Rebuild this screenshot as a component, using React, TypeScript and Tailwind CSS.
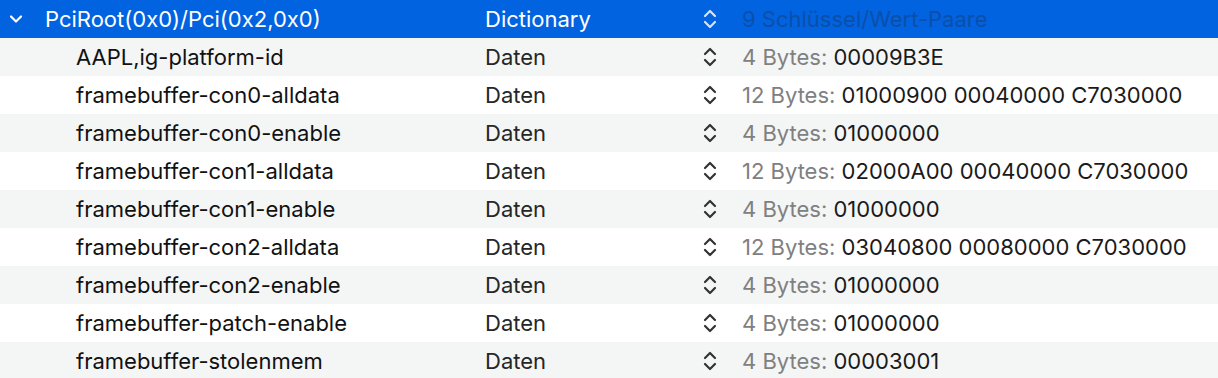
const ROWS: { key: string; size: string; value: string }[] = [
  { key: 'AAPL,ig-platform-id', size: '4 Bytes:', value: '00009B3E' },
  { key: 'framebuffer-con0-alldata', size: '12 Bytes:', value: '01000900 00040000 C7030000' },
  { key: 'framebuffer-con0-enable', size: '4 Bytes:', value: '01000000' },
  { key: 'framebuffer-con1-alldata', size: '12 Bytes:', value: '02000A00 00040000 C7030000' },
  { key: 'framebuffer-con1-enable', size: '4 Bytes:', value: '01000000' },
  { key: 'framebuffer-con2-alldata', size: '12 Bytes:', value: '03040800 00080000 C7030000' },
  { key: 'framebuffer-con2-enable', size: '4 Bytes:', value: '01000000' },
  { key: 'framebuffer-patch-enable', size: '4 Bytes:', value: '01000000' },
  { key: 'framebuffer-stolenmem', size: '4 Bytes:', value: '00003001' },
]

function Stepper({ className }: { className: string }) {
  return (
    <svg width="14" height="22" viewBox="0 0 14 22" fill="none" className={className}>
      <path d="M2 8 L7 3 L12 8" stroke="currentColor" strokeWidth="2.2" strokeLinecap="round" strokeLinejoin="round" />
      <path d="M2 14 L7 19 L12 14" stroke="currentColor" strokeWidth="2.2" strokeLinecap="round" strokeLinejoin="round" />
    </svg>
  )
}

export default function App() {
  return (
    <div className="w-[1218px] h-[378px] overflow-hidden bg-white font-['Inter','Liberation_Sans',sans-serif] text-[22px] leading-none">
      {/* Selected dictionary row */}
      <div className="flex items-center h-[38px] bg-[#0163e0] text-white">
        <div className="w-[470px] flex items-center">
          <svg width="14" height="10" viewBox="0 0 14 10" fill="none" className="ml-[9px] mr-[22px]">
            <path d="M2 2.5 L7 7.5 L12 2.5" stroke="currentColor" strokeWidth="2.2" strokeLinecap="round" strokeLinejoin="round" />
          </svg>
          <span>PciRoot(0x0)/Pci(0x2,0x0)</span>
        </div>
        <div className="w-[232px] pl-[15px]">Dictionary</div>
        <Stepper className="text-[#d6e4fb] ml-px" />
        <span className="ml-[25px] text-[#0b4fa9]">9 Schlüssel/Wert-Paare</span>
      </div>

      {ROWS.map((row, i) => (
        <div
          key={row.key}
          className={`flex items-center h-[38px] ${i % 2 === 0 ? 'bg-[#f4f5f5]' : 'bg-white'}`}
        >
          <div className="w-[470px] pl-[76px] text-[#111]">{row.key}</div>
          <div className="w-[232px] pl-[15px] text-[#262626]">Daten</div>
          <Stepper className="text-[#333] ml-px" />
          <span className="ml-[25px]">
            <span className="text-[#808080]">{row.size} </span>
            <span className="text-[#1a1a1a]">{row.value}</span>
          </span>
        </div>
      ))}
    </div>
  )
}
